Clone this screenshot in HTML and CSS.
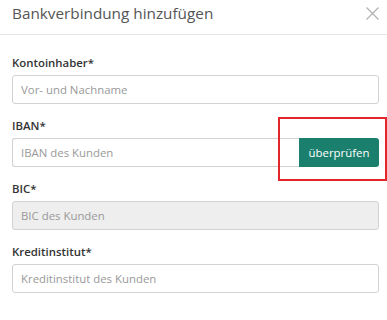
FILE: index.html
```html
<!DOCTYPE html>
<html lang="de">
<head>
    <meta charset="UTF-8">
    <meta name="viewport" content="width=device-width, initial-scale=1.0">
    <title>Bankverbindung hinzufügen</title>
    <link rel="stylesheet" href="styles.css">
</head>
<body>
    <div class="modal">
        <div class="modal-header">
            <h4 class="modal-title">Bankverbindung hinzufügen</h4>
            <button class="close" type="button" aria-label="Schließen">
                <svg width="13" height="13" viewBox="0 0 13 13">
                    <path d="M0.5 0.5 L12.5 12.5 M12.5 0.5 L0.5 12.5" stroke="#b3b3b3" stroke-width="1.3" fill="none"/>
                </svg>
            </button>
        </div>
        <form class="modal-body">
            <div class="form-group">
                <label for="owner">Kontoinhaber*</label>
                <input type="text" id="owner" placeholder="Vor- und Nachname">
            </div>
            <div class="form-group">
                <label for="iban">IBAN*</label>
                <div class="input-group">
                    <input type="text" id="iban" placeholder="IBAN des Kunden">
                    <button type="button" class="btn-check">überprüfen</button>
                    <div class="highlight"></div>
                </div>
            </div>
            <div class="form-group">
                <label for="bic">BIC*</label>
                <input type="text" id="bic" placeholder="BIC des Kunden" disabled>
            </div>
            <div class="form-group">
                <label for="bank">Kreditinstitut*</label>
                <input type="text" id="bank" placeholder="Kreditinstitut des Kunden">
            </div>
        </form>
    </div>
</body>
</html>
```

FILE: styles.css
```css
body {
    margin: 0;
    font-family: "Open Sans", Arial, sans-serif;
    background: #fff;
    color: #333;
}
.modal {
    width: 387px;
}
.modal-header {
    display: flex;
    justify-content: space-between;
    align-items: flex-start;
    height: 35px;
    padding: 2px 8px 0 12px;
    box-sizing: border-box;
    border-bottom: 1px solid #e5e5e5;
}
.modal-title {
    margin: 0;
    font-size: 15.3px;
    font-weight: normal;
    line-height: 22px;
    color: #555;
}
.close {
    border: 0;
    background: none;
    padding: 0;
    margin: 5px 0 0 0;
    width: 13px;
    height: 13px;
    cursor: pointer;
}
.close svg {
    display: block;
}
.modal-body {
    padding: 20px 8px 0 12px;
}
.form-group {
    margin-bottom: 14px;
}
label {
    display: block;
    font-size: 11.4px;
    font-weight: 600;
    line-height: 16px;
    margin-bottom: 4px;
    color: #333;
}
input[type="text"] {
    display: block;
    width: 100%;
    height: 29px;
    box-sizing: border-box;
    padding: 0 8px;
    border: 1px solid #d2d2d2;
    border-radius: 3px;
    font-family: inherit;
    font-size: 11.4px;
    color: #555;
    background: #fff;
}
input::placeholder {
    color: #999;
}
input:disabled {
    background: #eee;
}
.input-group {
    position: relative;
    display: flex;
}
.input-group input[type="text"] {
    flex: 1;
    border-right: 0;
    border-radius: 3px 0 0 3px;
}
.btn-check {
    width: 80px;
    height: 29px;
    border: 0;
    border-radius: 0 3px 3px 0;
    background: #1b7f6d;
    color: #fff;
    font-family: inherit;
    font-size: 11.4px;
    cursor: pointer;
}
.highlight {
    position: absolute;
    left: 266px;
    top: -21px;
    width: 109px;
    height: 64px;
    box-sizing: border-box;
    border: 2px solid #e3262a;
    pointer-events: none;
}
```
